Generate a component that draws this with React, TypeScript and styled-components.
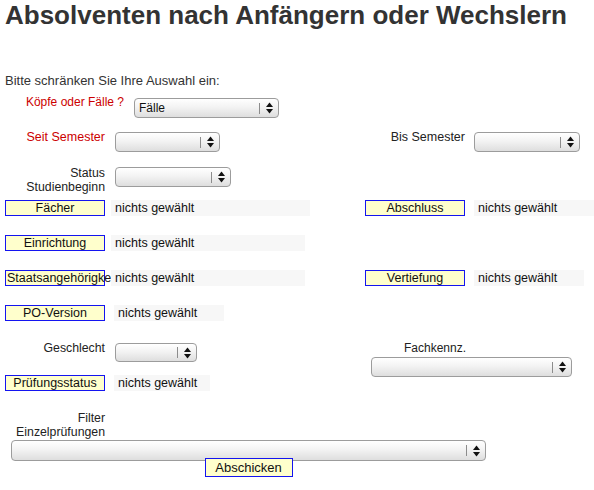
import styled, { createGlobalStyle } from "styled-components";

const GlobalStyle = createGlobalStyle`
  body {
    margin: 0;
    background: #ffffff;
    font-family: "Liberation Sans", Arial, sans-serif;
  }
`;

const Page = styled.div`
  width: 594px;
  height: 490px;
  box-sizing: border-box;
  padding-left: 5px;
  overflow: hidden;
`;

const Title = styled.h1`
  margin: 0;
  font-size: 26px;
  line-height: 30px;
  font-weight: bold;
  color: #333333;
  white-space: nowrap;
`;

const Intro = styled.div`
  margin-top: 44px;
  font-size: 13px;
  line-height: 14px;
  color: #333333;
`;

const Row = styled.div<{ $mt: number; $height?: number }>`
  display: flex;
  align-items: flex-start;
  margin-top: ${(p) => p.$mt}px;
  height: ${(p) => (p.$height ? `${p.$height}px` : "auto")};
`;

const LeftHalf = styled.div`
  width: 360px;
  flex: none;
  display: flex;
  align-items: flex-start;
`;

const RightHalf = styled.div`
  flex: 1;
  display: flex;
  align-items: flex-start;
`;

const Label = styled.div<{ $width: number; $red?: boolean; $gap?: number; $size?: number }>`
  width: ${(p) => p.$width}px;
  margin-right: ${(p) => p.$gap ?? 10}px;
  flex: none;
  text-align: right;
  font-size: ${(p) => p.$size ?? 12.3}px;
  line-height: 14px;
  color: ${(p) => (p.$red ? "#cc0000" : "#222222")};
  white-space: nowrap;
`;

const SelectBox = styled.div<{ $width: number; $height?: number; $mt?: number; $ml?: number }>`
  width: ${(p) => p.$width}px;
  height: ${(p) => p.$height ?? 20}px;
  margin-top: ${(p) => p.$mt ?? 0}px;
  margin-left: ${(p) => p.$ml ?? 0}px;
  flex: none;
  box-sizing: border-box;
  border: 1px solid #9c9c9c;
  border-radius: 4px;
  background: linear-gradient(to bottom, #ffffff 0%, #f3f3f3 45%, #dedede 100%);
  display: flex;
  align-items: center;
  font-size: 12px;
  color: #111111;
`;

const SelectValue = styled.span`
  flex: 1;
  padding-left: 4px;
  white-space: nowrap;
  overflow: hidden;
`;

const SelectDivider = styled.span`
  width: 1px;
  height: 11px;
  background: #8c8c8c;
  flex: none;
`;

const SelectArrows = styled.span`
  width: 18px;
  flex: none;
  display: flex;
  justify-content: center;
  align-items: center;
`;

const ButtonCell = styled.div<{ $width: number }>`
  width: ${(p) => p.$width}px;
  flex: none;
  overflow: hidden;
`;

const PickButton = styled.div<{ $start?: boolean }>`
  width: 100px;
  height: 16px;
  box-sizing: border-box;
  border: 1px solid #1414f0;
  background: #ffffcc;
  font-size: 12.5px;
  line-height: 14px;
  color: #111111;
  white-space: nowrap;
  text-align: ${(p) => (p.$start ? "left" : "center")};
  padding-left: ${(p) => (p.$start ? "1px" : "0")};
  cursor: pointer;
`;

const ValueBox = styled.div<{ $width?: number }>`
  width: ${(p) => (p.$width ? `${p.$width}px` : "auto")};
  flex: ${(p) => (p.$width ? "none" : "1")};
  height: 16px;
  box-sizing: border-box;
  padding-left: 4px;
  background: #f7f7f7;
  font-size: 12.5px;
  line-height: 16px;
  color: #111111;
  white-space: nowrap;
`;

const Stack = styled.div`
  display: flex;
  flex-direction: column;
`;

const SubmitBar = styled.div`
  width: 475px;
  margin-left: 6px;
  margin-top: -3px;
  display: flex;
  justify-content: center;
`;

const SubmitButton = styled.div`
  position: relative;
  z-index: 1;
  width: 88px;
  height: 19px;
  box-sizing: border-box;
  border: 1px solid #1414f0;
  background: #ffffcc;
  font-size: 13px;
  line-height: 17px;
  text-align: center;
  color: #111111;
  cursor: pointer;
`;

const Arrows = () => (
  <svg width="7" height="12" viewBox="0 0 7 12">
    <polygon points="0,5 3.5,0.5 7,5" fill="#111" />
    <polygon points="0,7 3.5,11.5 7,7" fill="#111" />
  </svg>
);

const Select = (props: { width: number; height?: number; mt?: number; ml?: number; value?: string }) => (
  <SelectBox $width={props.width} $height={props.height} $mt={props.mt} $ml={props.ml}>
    <SelectValue>{props.value ?? ""}</SelectValue>
    <SelectDivider />
    <SelectArrows>
      <Arrows />
    </SelectArrows>
  </SelectBox>
);

const Picker = (props: { label: string; cell: number; value: number | undefined; start?: boolean }) => (
  <>
    <ButtonCell $width={props.cell}>
      <PickButton $start={props.start}>{props.label}</PickButton>
    </ButtonCell>
    <ValueBox $width={props.value}>nichts gewählt</ValueBox>
  </>
);

export default function App() {
  return (
    <Page>
      <GlobalStyle />
      <Title>Absolventen nach Anfängern oder Wechslern</Title>
      <Intro>Bitte schränken Sie Ihre Auswahl ein:</Intro>

      <Row $mt={7}>
        <Label $width={119} $red $size={12}>
          Köpfe oder Fälle ?
        </Label>
        <Select width={145} mt={3} value="Fälle" />
      </Row>

      <Row $mt={12}>
        <LeftHalf>
          <Label $width={100} $red $size={12.5}>
            Seit Semester
          </Label>
          <Select width={105} mt={2} />
        </LeftHalf>
        <RightHalf>
          <Label $width={100} $gap={9} $size={12.5}>
            Bis Semester
          </Label>
          <Select width={106} mt={2} />
        </RightHalf>
      </Row>

      <Row $mt={14}>
        <Label $width={100}>
          Status
          <br />
          Studienbeginn
        </Label>
        <Select width={116} mt={1} />
      </Row>

      <Row $mt={6}>
        <LeftHalf>
          <Picker label="Fächer" cell={106} value={199} />
        </LeftHalf>
        <RightHalf>
          <Picker label="Abschluss" cell={109} value={undefined} />
        </RightHalf>
      </Row>

      <Row $mt={19}>
        <LeftHalf>
          <Picker label="Einrichtung" cell={106} value={194} />
        </LeftHalf>
      </Row>

      <Row $mt={19}>
        <LeftHalf>
          <Picker label="Staatsangehörigkeit" cell={106} value={194} start />
        </LeftHalf>
        <RightHalf>
          <Picker label="Vertiefung" cell={109} value={110} />
        </RightHalf>
      </Row>

      <Row $mt={19}>
        <LeftHalf>
          <Picker label="PO-Version" cell={109} value={110} />
        </LeftHalf>
      </Row>

      <Row $mt={20} $height={34}>
        <LeftHalf>
          <Label $width={100}>Geschlecht</Label>
          <Select width={82} height={19} mt={2} />
        </LeftHalf>
        <RightHalf>
          <Stack>
            <Label $width={101} $gap={0} $size={12}>
              Fachkennz.
            </Label>
            <Select width={201} mt={2} ml={6} />
          </Stack>
        </RightHalf>
      </Row>

      <Row $mt={0}>
        <LeftHalf>
          <Picker label="Prüfungsstatus" cell={109} value={96} />
        </LeftHalf>
      </Row>

      <Row $mt={20}>
        <Label $width={100}>
          Filter
          <br />
          Einzelprüfungen
        </Label>
      </Row>

      <Select width={475} height={21} mt={1} ml={6} />
      <SubmitBar>
        <SubmitButton>Abschicken</SubmitButton>
      </SubmitBar>
    </Page>
  );
}
